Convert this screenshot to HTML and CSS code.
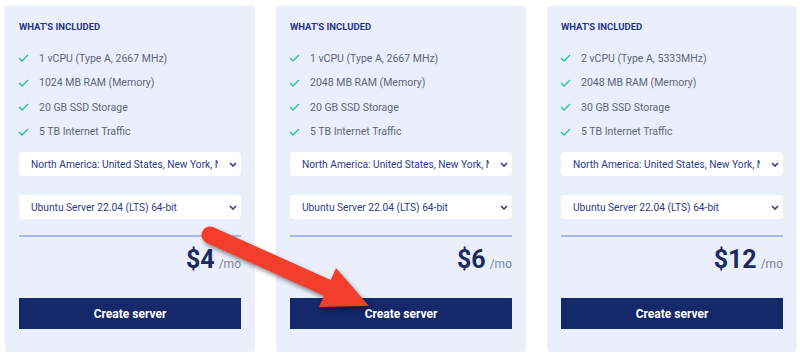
FILE: index.html
```html
<!DOCTYPE html>
<html lang="en">
  <head>
    <meta charset="UTF-8" />
    <meta name="viewport" content="width=device-width, initial-scale=1.0" />
    <title>Server plans</title>
    <link rel="stylesheet" href="styles.css">
  </head>
  <body>
    <div class="plans">
      <div class="card">
        <h4>What's included</h4>
        <ul class="features">
          <li><svg class="check" viewBox="0 0 11 8"><polyline points="1,4 4,7 10,1" /></svg>1 vCPU (Type A, 2667 MHz)</li>
          <li><svg class="check" viewBox="0 0 11 8"><polyline points="1,4 4,7 10,1" /></svg>1024 MB RAM (Memory)</li>
          <li><svg class="check" viewBox="0 0 11 8"><polyline points="1,4 4,7 10,1" /></svg>20 GB SSD Storage</li>
          <li><svg class="check" viewBox="0 0 11 8"><polyline points="1,4 4,7 10,1" /></svg>5 TB Internet Traffic</li>
        </ul>
        <div class="select location">
          <span>North America: United States, New York, New York</span>
          <svg class="chevron" viewBox="0 0 8 5"><polyline points="1,1 4,4 7,1" /></svg>
        </div>
        <div class="select os">
          <span>Ubuntu Server 22.04 (LTS) 64-bit</span>
          <svg class="chevron" viewBox="0 0 8 5"><polyline points="1,1 4,4 7,1" /></svg>
        </div>
        <div class="price"><strong>$4</strong><span>/mo</span></div>
        <button>Create server</button>
      </div>

      <div class="card">
        <h4>What's included</h4>
        <ul class="features">
          <li><svg class="check" viewBox="0 0 11 8"><polyline points="1,4 4,7 10,1" /></svg>1 vCPU (Type A, 2667 MHz)</li>
          <li><svg class="check" viewBox="0 0 11 8"><polyline points="1,4 4,7 10,1" /></svg>2048 MB RAM (Memory)</li>
          <li><svg class="check" viewBox="0 0 11 8"><polyline points="1,4 4,7 10,1" /></svg>20 GB SSD Storage</li>
          <li><svg class="check" viewBox="0 0 11 8"><polyline points="1,4 4,7 10,1" /></svg>5 TB Internet Traffic</li>
        </ul>
        <div class="select location">
          <span>North America: United States, New York, New York</span>
          <svg class="chevron" viewBox="0 0 8 5"><polyline points="1,1 4,4 7,1" /></svg>
        </div>
        <div class="select os">
          <span>Ubuntu Server 22.04 (LTS) 64-bit</span>
          <svg class="chevron" viewBox="0 0 8 5"><polyline points="1,1 4,4 7,1" /></svg>
        </div>
        <div class="price"><strong>$6</strong><span>/mo</span></div>
        <button>Create server</button>
      </div>

      <div class="card">
        <h4>What's included</h4>
        <ul class="features">
          <li><svg class="check" viewBox="0 0 11 8"><polyline points="1,4 4,7 10,1" /></svg>2 vCPU (Type A, 5333MHz)</li>
          <li><svg class="check" viewBox="0 0 11 8"><polyline points="1,4 4,7 10,1" /></svg>2048 MB RAM (Memory)</li>
          <li><svg class="check" viewBox="0 0 11 8"><polyline points="1,4 4,7 10,1" /></svg>30 GB SSD Storage</li>
          <li><svg class="check" viewBox="0 0 11 8"><polyline points="1,4 4,7 10,1" /></svg>5 TB Internet Traffic</li>
        </ul>
        <div class="select location">
          <span>North America: United States, New York, New York</span>
          <svg class="chevron" viewBox="0 0 8 5"><polyline points="1,1 4,4 7,1" /></svg>
        </div>
        <div class="select os">
          <span>Ubuntu Server 22.04 (LTS) 64-bit</span>
          <svg class="chevron" viewBox="0 0 8 5"><polyline points="1,1 4,4 7,1" /></svg>
        </div>
        <div class="price"><strong>$12</strong><span>/mo</span></div>
        <button>Create server</button>
      </div>
    </div>

    <!-- annotation arrow drawn over the screenshot -->
    <svg class="arrow" viewBox="0 0 800 361">
      <line x1="210" y1="235" x2="330" y2="289" />
      <polygon points="336,268 369,306 319,307" />
    </svg>
  </body>
</html>
```

FILE: styles.css
```css
body {
  margin: 0;
  background: #fff;
  font-family: Roboto, "Liberation Sans", sans-serif;
  position: relative;
  height: 361px;
  overflow: hidden;
}
.plans {
  display: flex;
  gap: 21px;
  padding: 6px 5px;
}
.card {
  width: 250px;
  box-sizing: border-box;
  padding: 15px 14px 23px;
  background: #ebeffc;
  border-radius: 3px;
  display: flex;
  flex-direction: column;
}
h4 {
  margin: 0;
  font-size: 9.5px;
  line-height: 12px;
  font-weight: 700;
  text-transform: uppercase;
  color: #26338a;
}
.features {
  list-style: none;
  margin: 13px 0 0;
  padding: 0;
}
.features li {
  display: flex;
  align-items: center;
  height: 24.5px;
  font-size: 10.5px;
  color: #5d6579;
}
.check {
  width: 11px;
  height: 8px;
  margin: 0 10px 0 -1px;
  fill: none;
  stroke: #1fc3a0;
  stroke-width: 1.3;
}
.select {
  height: 24px;
  margin-top: 8px;
  padding: 0 4px 0 12px;
  background: #fff;
  border-radius: 4px;
  display: flex;
  align-items: center;
  font-size: 10.2px;
  color: #2d3b8e;
}
.select span {
  flex: 1;
  white-space: nowrap;
  overflow: hidden;
}
.select.os {
  margin-top: 19px;
}
.chevron {
  width: 8px;
  height: 5px;
  margin-left: 11px;
  fill: none;
  stroke: #2d3b8e;
  stroke-width: 1.6;
}
.price {
  margin-top: 16px;
  padding-top: 8px;
  border-top: 2px solid #aab9f1;
  display: flex;
  justify-content: flex-end;
  align-items: baseline;
  line-height: 30px;
}
.price strong {
  font-size: 25px;
  font-weight: 700;
  color: #1b2a60;
}
.price span {
  margin-left: 4px;
  font-size: 12px;
  color: #7c8397;
}
button {
  margin-top: 19px;
  height: 31px;
  border: none;
  background: #14286a;
  color: #fff;
  font-family: inherit;
  font-size: 12px;
  font-weight: 700;
  cursor: pointer;
}
.arrow {
  position: absolute;
  left: 0;
  top: 0;
  width: 800px;
  height: 361px;
  pointer-events: none;
  filter: drop-shadow(2px 3px 2px rgba(0, 0, 0, 0.45));
}
.arrow line {
  stroke: #f43d2b;
  stroke-width: 17;
  stroke-linecap: round;
}
.arrow polygon {
  fill: #f43d2b;
}
```
